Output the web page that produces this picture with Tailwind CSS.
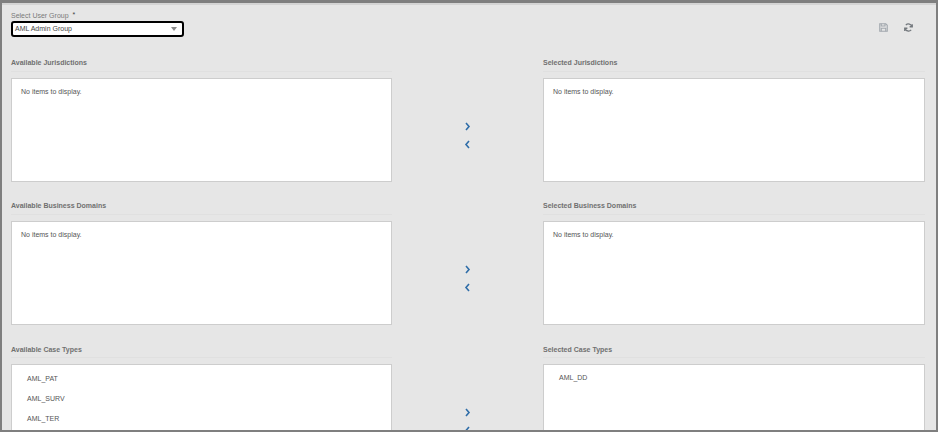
<!DOCTYPE html>
<html lang="en">
<head>
  <meta charset="UTF-8" />
  <title>User Group Mapping</title>
  <script src="https://cdn.jsdelivr.net/npm/@tailwindcss/browser@4"></script>
</head>
<body class="bg-[#7f7f7f]">
  <div class="w-[938px] h-[432px] overflow-hidden border-x-2 border-t-[3px] border-b-2 border-[#7f7f7f] bg-[#e6e6e6] font-['Liberation_Sans',sans-serif] text-[#555]">
    <div class="h-[427px] overflow-hidden border-t-[2px] border-[#d4d4d4] pl-[9px] pr-[11px]">
      <div class="flex justify-between h-[47px]">
        <div class="pt-[5px]">
          <div class="text-[7px] leading-[11px] text-[#7a7a7a]">Select User Group <span class="relative -top-[1px] ml-[2px] text-[#444]">*</span></div>
          <div class="flex items-center justify-between w-[173px] h-[16px] pl-[2px] pr-[5px] bg-white border-2 border-black rounded-[3px] text-[7px] text-[#444]">
            <span>AML Admin Group</span>
            <span class="w-0 h-0 border-x-[3.5px] border-x-transparent border-t-[4px] border-t-[#8a8a8a]"></span>
          </div>
        </div>
        <div class="flex items-start gap-[16px] pt-[18px] pr-[12px]">
          <svg class="w-[9px] h-[9px]" viewBox="0 0 12 12" fill="none" stroke="#a2a8ae" stroke-width="1.5"><path d="M1 1h8l2 2v8H1z" /><path d="M3 1v3h5V1M3 11V7h6v4" /></svg>
          <svg class="w-[9px] h-[9px]" viewBox="0 0 12 12" fill="none" stroke="#73787d" stroke-width="1.7"><path d="M10.6 5A4.8 4.8 0 0 0 2.4 2.8" /><path d="M1.4 7A4.8 4.8 0 0 0 9.6 9.2" /><path d="M11 1.5V5H7.5M1 10.5V7h3.5" /></svg>
        </div>
      </div>

      <div class="grid grid-cols-[381px_151px_382px] grid-rows-[143px_143px_143px]">
        <div>
          <div class="h-[20px] pt-[5px] text-[7px] leading-[11px] font-bold text-[#707070] border-b border-[#e0e0e0]">Available Jurisdictions</div>
          <div class="h-[104px] mt-[6px] px-[9px] py-[8px] bg-white border border-[#cdcdcd] text-[7px] leading-[9px]">No items to display.</div>
        </div>
        <div class="flex flex-col items-center gap-[9px] pt-[70px]">
          <svg class="w-[9px] h-[9px]" viewBox="0 0 9 9" fill="none" stroke="#2f6da8" stroke-width="1.6"><path d="M3 1l3 3.5L3 8" /></svg>
          <svg class="w-[9px] h-[9px]" viewBox="0 0 9 9" fill="none" stroke="#2f6da8" stroke-width="1.6"><path d="M6 1L3 4.5 6 8" /></svg>
        </div>
        <div>
          <div class="h-[20px] pt-[5px] text-[7px] leading-[11px] font-bold text-[#707070] border-b border-[#e0e0e0]">Selected Jurisdictions</div>
          <div class="h-[104px] mt-[6px] px-[9px] py-[8px] bg-white border border-[#cdcdcd] text-[7px] leading-[9px]">No items to display.</div>
        </div>

        <div>
          <div class="h-[20px] pt-[5px] text-[7px] leading-[11px] font-bold text-[#707070] border-b border-[#e0e0e0]">Available Business Domains</div>
          <div class="h-[104px] mt-[6px] px-[9px] py-[8px] bg-white border border-[#cdcdcd] text-[7px] leading-[9px]">No items to display.</div>
        </div>
        <div class="flex flex-col items-center gap-[9px] pt-[70px]">
          <svg class="w-[9px] h-[9px]" viewBox="0 0 9 9" fill="none" stroke="#2f6da8" stroke-width="1.6"><path d="M3 1l3 3.5L3 8" /></svg>
          <svg class="w-[9px] h-[9px]" viewBox="0 0 9 9" fill="none" stroke="#2f6da8" stroke-width="1.6"><path d="M6 1L3 4.5 6 8" /></svg>
        </div>
        <div>
          <div class="h-[20px] pt-[5px] text-[7px] leading-[11px] font-bold text-[#707070] border-b border-[#e0e0e0]">Selected Business Domains</div>
          <div class="h-[104px] mt-[6px] px-[9px] py-[8px] bg-white border border-[#cdcdcd] text-[7px] leading-[9px]">No items to display.</div>
        </div>

        <div>
          <div class="h-[20px] pt-[6px] text-[7px] leading-[11px] font-bold text-[#707070] border-b border-[#e0e0e0]">Available Case Types</div>
          <div class="h-[104px] mt-[6px] pl-[15px] pt-[4px] bg-white border border-[#cdcdcd] text-[7px] leading-[20px]">
            <div>AML_PAT</div>
            <div>AML_SURV</div>
            <div>AML_TER</div>
          </div>
        </div>
        <div class="flex flex-col items-center gap-[9px] pt-[70px]">
          <svg class="w-[9px] h-[9px]" viewBox="0 0 9 9" fill="none" stroke="#2f6da8" stroke-width="1.6"><path d="M3 1l3 3.5L3 8" /></svg>
          <svg class="w-[9px] h-[9px]" viewBox="0 0 9 9" fill="none" stroke="#2f6da8" stroke-width="1.6"><path d="M6 1L3 4.5 6 8" /></svg>
        </div>
        <div>
          <div class="h-[20px] pt-[6px] text-[7px] leading-[11px] font-bold text-[#707070] border-b border-[#e0e0e0]">Selected Case Types</div>
          <div class="h-[104px] mt-[6px] pl-[15px] pt-[3px] bg-white border border-[#cdcdcd] text-[7px] leading-[20px]">
            <div>AML_DD</div>
          </div>
        </div>
      </div>
    </div>
  </div>
</body>
</html>
